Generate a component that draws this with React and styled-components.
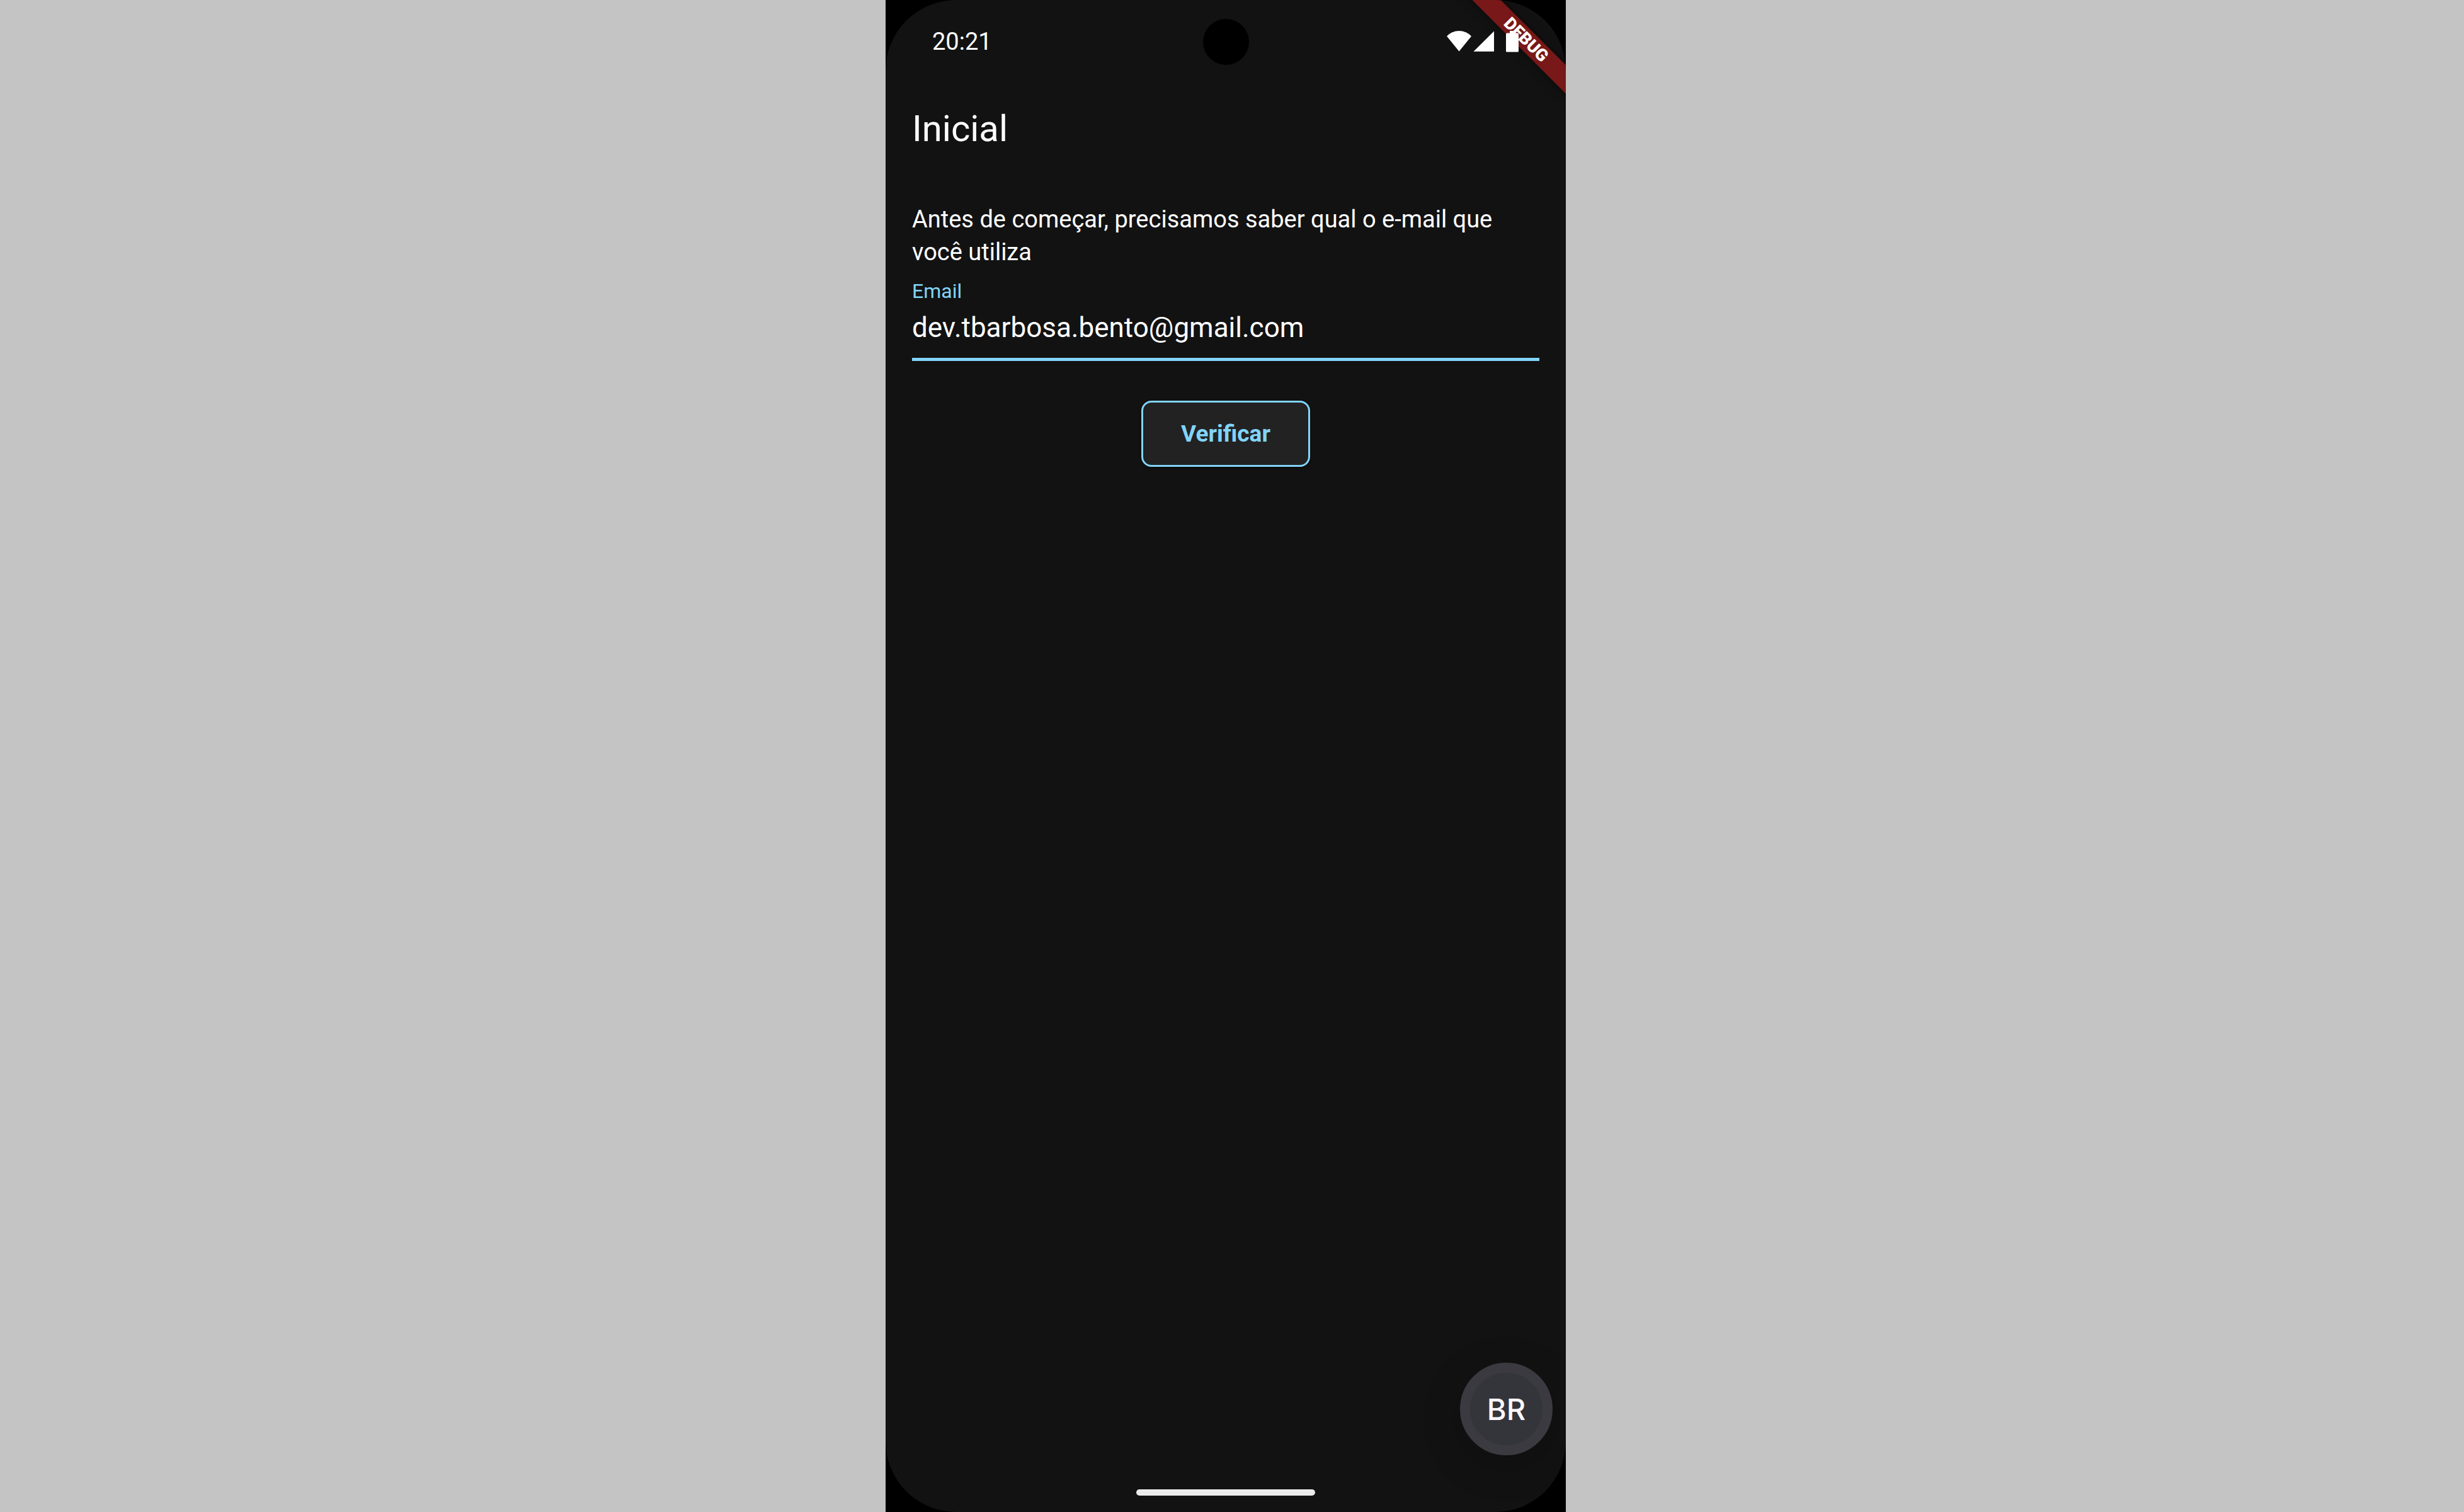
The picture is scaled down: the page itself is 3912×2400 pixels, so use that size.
import React from "react";
import styled, { createGlobalStyle } from "styled-components";

const GlobalStyle = createGlobalStyle`
  *, *::before, *::after { box-sizing: border-box; }
  body {
    margin: 0;
    background: #c4c4c4;
    font-family: Roboto, "Noto Sans", sans-serif;
  }
`;

const Page = styled.div`
  display: flex;
  justify-content: center;
  min-height: 100vh;
  padding-right: 20px;
`;

const Phone = styled.div`
  display: flex;
  width: 100%;
  max-width: 1080px;
  background: #000;
`;

const Screen = styled.div`
  position: relative;
  display: flex;
  flex: 1;
  flex-direction: column;
  overflow: hidden;
  border-radius: 112px;
  background: #121212;
  color: #fff;
`;

const StatusBar = styled.div`
  display: grid;
  grid-template-columns: 1fr auto 1fr;
  align-items: center;
  height: 132px;
  padding: 0 74px;
`;

const Clock = styled.time`
  font-size: 38px;
  line-height: 52px;
`;

const Camera = styled.div`
  width: 73px;
  height: 73px;
  border-radius: 50%;
  background: #000;
`;

const StatusIcons = styled.div`
  position: relative;
  z-index: 2;
  display: flex;
  justify-content: flex-end;
  align-items: center;
`;

const DebugBanner = styled.div`
  position: absolute;
  z-index: 1;
  top: 47px;
  right: -137px;
  width: 400px;
  height: 32px;
  transform: rotate(45deg);
  background: #781818;
  box-shadow: 0 0 16px rgba(0, 0, 0, 0.5);
  font-size: 27px;
  font-weight: 900;
  line-height: 32px;
  text-align: center;
`;

const AppBar = styled.header`
  display: flex;
  align-items: center;
  height: 144px;
  padding: 0 42px;
`;

const Title = styled.h1`
  margin: 0;
  font-size: 58px;
  font-weight: 400;
  line-height: 74px;
`;

const Form = styled.form`
  display: flex;
  flex: 1;
  flex-direction: column;
  padding: 46px 42px 0;
`;

const Message = styled.p`
  margin: 0 0 20px;
  font-size: 38px;
  line-height: 52px;
`;

const Field = styled.div`
  display: flex;
  flex-direction: column;
  gap: 10px;
  margin-bottom: 63px;
`;

const Label = styled.label`
  color: #81d4fa;
  font-size: 32px;
  line-height: 32px;
`;

const Input = styled.input`
  width: 100%;
  height: 85px;
  padding: 0 0 17px;
  border: 0;
  border-bottom: 5px solid #81d4fa;
  border-radius: 0;
  outline: 0;
  background: transparent;
  color: #fff;
  font-family: inherit;
  font-size: 44px;
`;

const VerifyButton = styled.button`
  align-self: center;
  height: 105px;
  padding: 0 60px;
  border: 3px solid #81d4fa;
  border-radius: 16px;
  background: #222;
  box-shadow: 0 2px 4px rgba(0, 0, 0, 0.4);
  color: #81d4fa;
  font-family: inherit;
  font-size: 37px;
  font-weight: 700;
`;

const RegionButton = styled.button`
  align-self: flex-end;
  width: 147px;
  height: 147px;
  margin-right: 21px;
  padding: 0;
  border: 16px solid #3a3a40;
  border-radius: 50%;
  background: #34353a;
  box-shadow: 0 16px 64px rgba(0, 0, 0, 0.2);
  color: #fef7ff;
  font-family: Inter, Roboto, sans-serif;
  font-size: 47px;
  font-weight: 500;
`;

const NavigationBar = styled.footer`
  display: flex;
  justify-content: center;
  padding: 54px 0 26px;
`;

const HomeIndicator = styled.div`
  width: 284px;
  height: 10px;
  border-radius: 5px;
  background: #ebebeb;
`;

function SignalIcons() {
  return (
    <svg width="115" height="36" viewBox="0 0 115 36" fill="#fff" aria-label="Wi-Fi, sinal e bateria" role="img">
      <path d="M0 9.5Q8 1 19.5 1T39 9.5L19.5 33.5Z" />
      <path d="M42.5 33.8L75 1.5V33.8Z" />
      <path d="M100 1h9v3.500h3.500a1.500 1.500 0 0 1 1.500 1.500v27a1.500 1.500 0 0 1-1.500 1.500h-17a1.500 1.500 0 0 1-1.500-1.500v-27a1.500 1.500 0 0 1 1.500-1.500h4.500z" />
    </svg>
  );
}

export default function App() {
  return (
    <>
      <GlobalStyle />
      <Page>
        <Phone>
          <Screen>
            <StatusBar>
              <Clock>20:21</Clock>
              <Camera />
              <StatusIcons>
                <SignalIcons />
              </StatusIcons>
            </StatusBar>
            <DebugBanner>DEBUG</DebugBanner>
            <AppBar>
              <Title>Inicial</Title>
            </AppBar>
            <Form onSubmit={(event) => event.preventDefault()}>
              <Message>
                Antes de começar, precisamos saber qual o e-mail que você utiliza
              </Message>
              <Field>
                <Label htmlFor="email">Email</Label>
                <Input id="email" type="email" defaultValue="dev.tbarbosa.bento@gmail.com" />
              </Field>
              <VerifyButton type="submit">Verificar</VerifyButton>
            </Form>
            <RegionButton type="button">BR</RegionButton>
            <NavigationBar>
              <HomeIndicator />
            </NavigationBar>
          </Screen>
        </Phone>
      </Page>
    </>
  );
}
